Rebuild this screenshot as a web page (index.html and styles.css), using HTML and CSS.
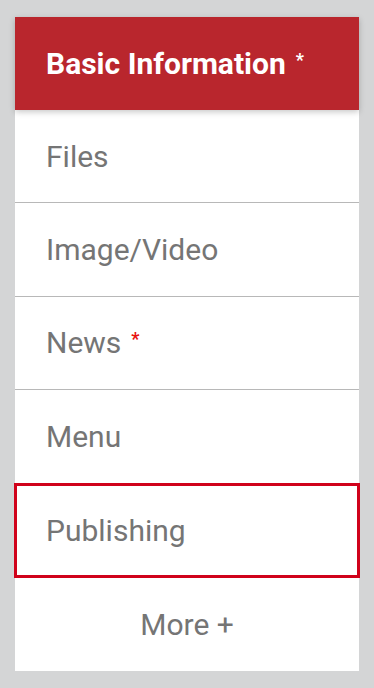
FILE: index.html
```html
<!DOCTYPE html>
<html>
<head>
<meta charset="utf-8">
<link rel="stylesheet" href="styles.css">
</head>
<body>
<nav class="panel">
  <div class="item header"><span>Basic Information</span><span class="star">*</span></div>
  <div class="item">Files</div>
  <div class="item">Image/Video</div>
  <div class="item"><span>News</span><span class="star req">*</span></div>
  <div class="item">Menu</div>
  <div class="item focus">Publishing</div>
  <div class="item more">More +</div>
</nav>
</body>
</html>
```
FILE: styles.css
```css
html, body {
  margin: 0;
  padding: 0;
}
body {
  background: #d4d5d6;
  width: 374px;
  height: 688px;
  font-family: Roboto, "Noto Sans", sans-serif;
}
.panel {
  margin: 17px 15px 0 15px;
  width: 344px;
  background: #fff;
  display: flex;
  flex-direction: column;
}
.item {
  height: 93.4px;
  box-sizing: border-box;
  display: flex;
  align-items: center;
  padding-left: 31px;
  font-size: 30px;
  color: #757575;
  border-bottom: 1px solid #b8b8b8;
}
.header {
  height: 93px;
  background: #b9262d;
  color: #fff;
  font-weight: 700;
  border-bottom: none;
  position: relative;
  z-index: 1;
  box-shadow: 0 2px 6px rgba(0, 0, 0, 0.22);
}
.star {
  font-size: 18px;
  margin-left: 10px;
  position: relative;
  top: -4px;
}
.req {
  color: #e8110f;
  font-weight: 700;
}
.focus {
  height: 95.4px;
  margin: -1px -1px 0 -1px;
  padding-left: 29px;
  border: 3px solid #d0021b;
}
.more {
  justify-content: center;
  padding-left: 0;
  border-bottom: none;
}
```
